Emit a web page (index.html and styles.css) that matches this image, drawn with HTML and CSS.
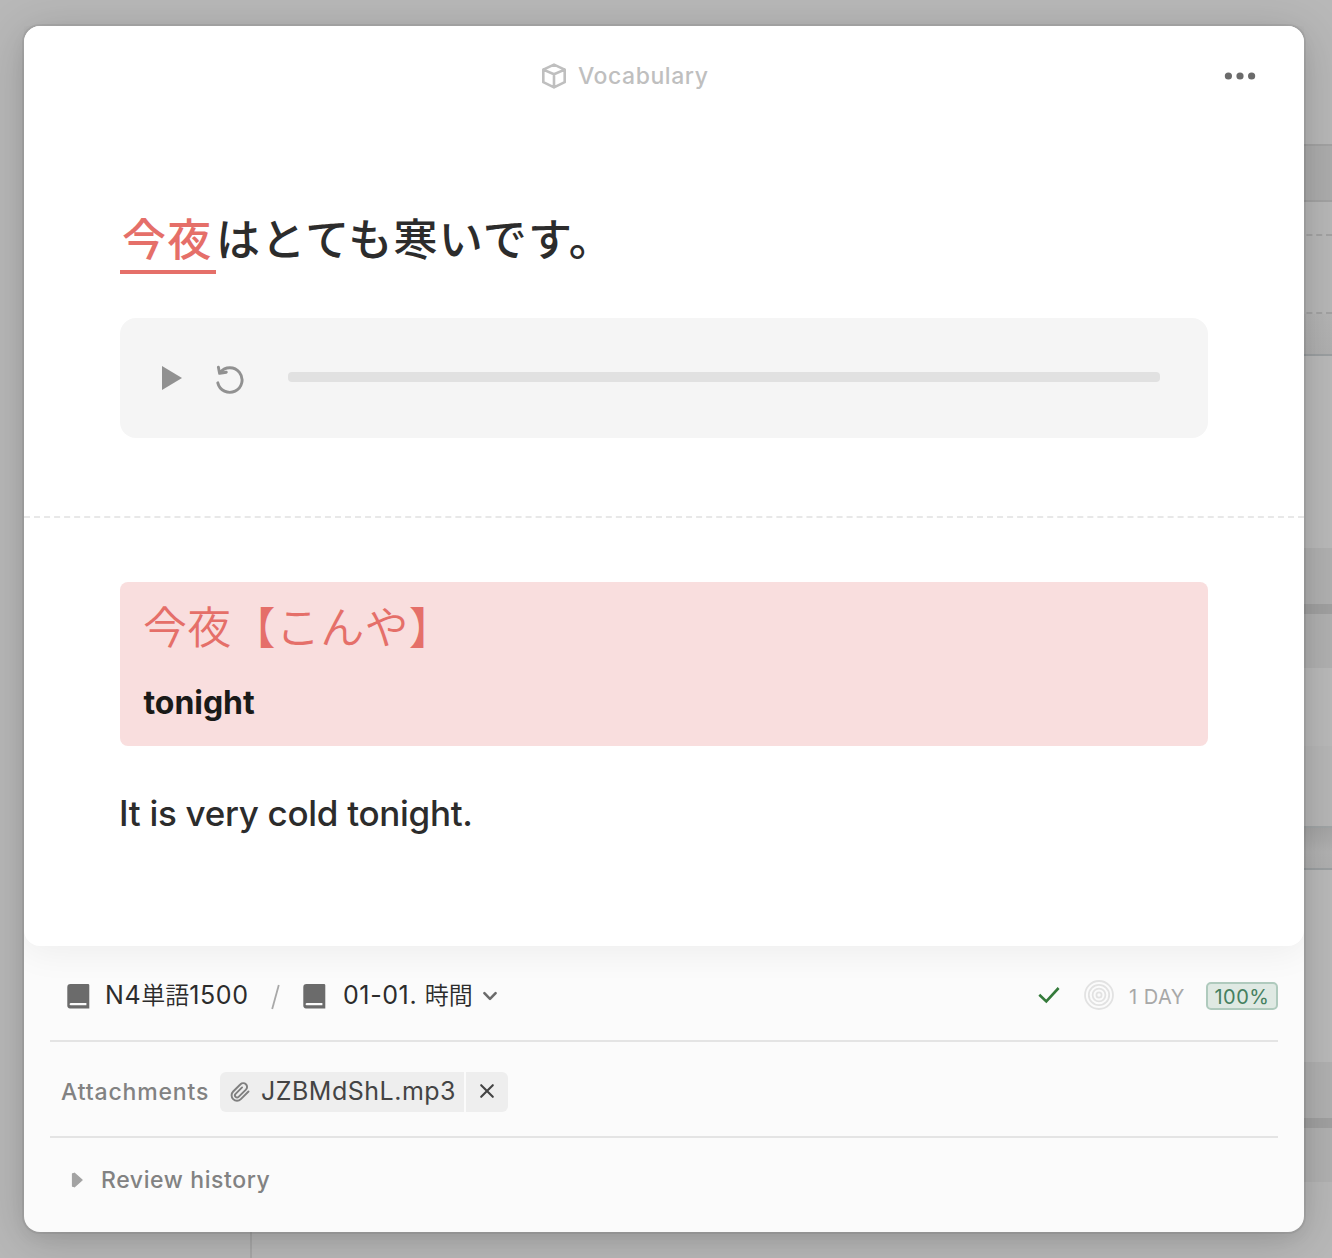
FILE: index.html
```html
<!DOCTYPE html>
<html lang="ja">
<head>
<meta charset="utf-8">
<title>Vocabulary</title>
<link rel="stylesheet" href="styles.css">
</head>
<body>
<div class="page">
  <div class="backdrop">
    <div class="sidebar-edge"></div>
    <div class="board">
      <div class="strip s-top"></div>
      <div class="strip s-head"></div>
      <div class="strip s-row1"></div>
      <div class="strip s-row2"></div>
      <div class="strip s-row3"></div>
      <div class="strip s-card"></div>
      <div class="strip s-block"></div>
      <div class="strip s-bar"></div>
      <div class="strip s-block2"></div>
      <div class="strip s-gap"></div>
      <div class="strip s-foot"></div>
      <div class="strip s-shadow"></div>
      <div class="strip s-card2"></div>
      <div class="strip s-block"></div>
      <div class="strip s-bar"></div>
      <div class="strip s-block2"></div>
    </div>
  </div>
  <main class="modal">
    <section class="card">
      <header class="card-head">
        <div class="kind">
          <svg width="26" height="26" viewBox="0 0 26 26" fill="none" stroke="currentColor" stroke-width="2.6" stroke-linejoin="round" stroke-linecap="round"><path d="M13 1.6 23.7 6.6V19.2L13 24.4 2.3 19.2V6.6ZM2.3 6.6 13 11.3 23.7 6.6M13 11.3V24.4"/></svg>
          <span class="kind-name">Vocabulary</span>
        </div>
        <svg class="more" width="32" height="8" viewBox="0 0 32 8" fill="currentColor"><circle cx="4.4" cy="4" r="3.6"/><circle cx="16" cy="4" r="3.6"/><circle cx="27.6" cy="4" r="3.6"/></svg>
      </header>
      <div class="front">
        <p class="prompt"><span class="target">今夜</span>はとても寒いです。</p>
        <div class="player">
          <svg class="play" width="20" height="24" viewBox="0 0 20 24"><path d="M0 0 20 12 0 24Z" fill="currentColor"/></svg>
          <svg class="replay" width="30" height="30" viewBox="0 0 30 30" fill="none" stroke="currentColor" stroke-width="2.9" stroke-linecap="round" stroke-linejoin="round"><path d="M2.8 18.8A12.3 12.3 0 1 0 5.2 8.3M3.4 3.2 4.6 9.4 11.3 8.2"/></svg>
          <div class="track"></div>
        </div>
      </div>
      <div class="divider"></div>
      <div class="back">
        <div class="answer">
          <p class="reading">今夜【こんや】</p>
          <p class="meaning">tonight</p>
        </div>
        <p class="translation">It is very cold tonight.</p>
      </div>
    </section>
    <footer class="info">
      <div class="row path-row">
        <svg class="book" width="23" height="25" viewBox="0 0 23 25"><path fill="currentColor" fill-rule="evenodd" d="M3.5 0H21Q22.3 0 22.3 1.3V24.4H3Q.3 24.4.3 21.6V3.2Q.3 0 3.5 0ZM4 19Q2.6 19 2.6 20.2T4 21.3H19.4V19Z"/></svg>
        <span class="deck">N4<span class="kanji">単語</span>1500</span>
        <svg class="slash" width="9" height="26" viewBox="0 0 9 26"><path d="M7.8 1 1.2 25" stroke="currentColor" stroke-width="1.8"/></svg>
        <svg class="book" width="23" height="25" viewBox="0 0 23 25"><path fill="currentColor" fill-rule="evenodd" d="M3.5 0H21Q22.3 0 22.3 1.3V24.4H3Q.3 24.4.3 21.6V3.2Q.3 0 3.5 0ZM4 19Q2.6 19 2.6 20.2T4 21.3H19.4V19Z"/></svg>
        <span class="lesson">01-01. <span class="kanji">時間</span></span>
        <svg class="chevron" width="16" height="10" viewBox="0 0 16 10" fill="none" stroke="currentColor" stroke-width="2.6" stroke-linecap="round" stroke-linejoin="round"><path d="M2.4 2.2 8 7.8 13.6 2.2"/></svg>
        <div class="stats">
          <svg class="check" width="22" height="18" viewBox="0 0 22 18" fill="none" stroke="#347a3a" stroke-width="2.6"><path d="M1.3 8.7 8.3 15.5 20.6 2"/></svg>
          <svg class="rings" width="30" height="30" viewBox="0 0 30 30" fill="none" stroke="#e2e2e2" stroke-width="1.8"><circle cx="15" cy="15" r="14"/><circle cx="15" cy="15" r="10.2"/><circle cx="15" cy="15" r="6.4"/><circle cx="15" cy="15" r="2.6"/></svg>
          <span class="interval">1 DAY</span>
          <span class="score">100%</span>
        </div>
      </div>
      <div class="row files-row">
        <span class="label">Attachments</span>
        <div class="file">
          <div class="file-name">
            <svg width="20" height="20" viewBox="0 0 24 24" fill="none" stroke="#808080" stroke-width="2.3" stroke-linecap="round" stroke-linejoin="round"><path d="M22.2 11.4 13 20.6a6.4 6.4 0 0 1-9.2-9.2L12.6 2.7a4.5 4.5 0 0 1 6.5 0 4.5 4.5 0 0 1 0 6.5l-8.8 8.7a2.5 2.5 0 0 1-3.6-3.6l7.8-7.8"/></svg>
            <span class="file-text">JZBMdShL.mp3</span>
          </div>
          <div class="file-close">
            <svg width="16" height="16" viewBox="0 0 16 16" stroke="#444" stroke-width="2.1" stroke-linecap="round"><path d="M2.2 2.2 13.8 13.8M13.8 2.2 2.2 13.8"/></svg>
          </div>
        </div>
      </div>
      <div class="row history-row">
        <svg width="12" height="16" viewBox="0 0 12 16"><path d="M1.6 1.8 3.4 1.3 11 8 3.4 14.7 1.6 14.2Z" fill="#a3a3a3" stroke="#a3a3a3" stroke-width="1.4" stroke-linejoin="round"/></svg>
        <span class="history">Review history</span>
      </div>
    </footer>
  </main>
</div>
</body>
</html>
```
FILE: styles.css
```css
* { box-sizing: border-box; }
body { margin: 0; font-family: Inter, "Noto Sans CJK JP", sans-serif; color: #2c2c2c; }
p { margin: 0; }
svg { display: block; flex: none; }

.page { display: grid; width: 1332px; height: 1258px; overflow: hidden; background: #b8b8b8; }
.backdrop, .modal { grid-area: 1 / 1; }
.backdrop { display: flex; justify-content: space-between; height: 1258px; }
.sidebar-edge { width: 252px; height: 200px; align-self: flex-end; background: #b8b8b8; border-right: 2px solid #a8a8a8; }
.board { width: 55px; }

.s-top { height: 144px; }
.s-head { height: 58px; background: #adadad; border-top: 2px solid #a3a3a3; border-bottom: 2px solid #a3a3a3; }
.s-row1 { height: 34px; border-bottom: 2px dashed #a3a3a3; }
.s-row2 { height: 78px; border-bottom: 2px dashed #a3a3a3; }
.s-row3 { height: 42px; border-bottom: 2px solid #9ca0a2; background: linear-gradient(#b5b5b5, #b0b0b0); }
.s-card { height: 192px; background: #bababa; }
.s-block { height: 56px; background: #b1b1b1; }
.s-bar { height: 10px; background: #a1a1a1; }
.s-block2 { height: 54px; background: #b1b1b1; }
.s-gap { height: 78px; background: #bababa; }
.s-foot { height: 80px; background: #b7b7b7; }
.s-shadow { height: 44px; background: linear-gradient(#a5a5a5, #b2b2b2 60%, #b0b0b0); border-top: 2px solid #a1a5a6; border-bottom: 2px solid #9ca0a2; }
.s-card2 { height: 192px; background: #bababa; }

.modal {
  width: 1280px; height: 1206px; margin: 26px 0 0 24px; z-index: 1;
  display: flex; flex-direction: column;
  background: #fbfbfb; border-radius: 16px;
  box-shadow: 0 0 0 2px rgba(0,0,0,.06), 0 8px 48px rgba(0,0,0,.18), 0 6px 16px rgba(0,0,0,.05);
}
.card {
  height: 920px; display: flex; flex-direction: column;
  background: #fff; border-radius: 16px;
  box-shadow: 0 6px 36px rgba(0,0,0,.06);
  clip-path: inset(0 0 -60px 0);
}
.card-head { display: flex; align-items: center; justify-content: space-between; height: 100px; padding: 0 48px 0 517px; }
.kind { display: flex; align-items: center; gap: 11px; color: #bfbfbf; }
.kind-name { font-size: 23px; font-weight: 500; letter-spacing: .55px; line-height: 32px; }
.more { color: #6b6b6b; }

.front { height: 390px; padding: 82px 96px 0; }
.prompt { height: 110px; font-size: 44px; line-height: 64px; font-weight: 500; letter-spacing: 1.25px; white-space: nowrap; }
.target { display: inline-block; width: 96px; height: 66px; padding-left: 2px; color: #e56f69; border-bottom: 4px solid #e56f69; line-height: 64px; }
.player { display: flex; align-items: center; height: 120px; padding: 0 48px 0 42px; border-radius: 16px; background: #f5f5f5; color: #919191; }
.replay { margin: 2px 0 0 33px; }
.track { flex: 1; height: 10px; margin: 0 0 2px 43px; border-radius: 4px; background: #e1e1e1; }

.divider { height: 2px; border-top: 2px dashed #e8e8e8; }
.back { padding: 64px 96px 0; }
.answer { height: 164px; padding: 15px 23px; border-radius: 8px; background: #f9dede; }
.reading { font-size: 44px; line-height: 62px; font-weight: 350; color: #e56f69; letter-spacing: .3px; }
.meaning { margin: 21px 0 0 .5px; font-size: 32px; line-height: 46px; font-weight: 700; color: #1a1a18; letter-spacing: -.05px; }
.translation { margin: 41px 0 0 -1px; font-size: 35px; line-height: 52px; font-weight: 450; letter-spacing: -.3px; }

.info { padding: 0 26px; }
.row { display: flex; align-items: center; }
.path-row { height: 96px; padding-left: 17px; border-bottom: 2px solid #e4e4e4; padding-top: 3px; }
.book { margin-top: 4px; color: #6b6b6b; }
.deck { width: 143px; margin-left: 15px; font-size: 25px; letter-spacing: .6px; white-space: nowrap; }
.deck, .lesson { margin-top: 2px; line-height: 36px; font-weight: 400; }
.kanji { font-size: 24px; font-weight: 350; letter-spacing: 0; }
.slash { margin: 4px 23px 0 23px; color: #a8a8a8; }
.lesson { width: 130px; margin-left: 17px; font-size: 25px; letter-spacing: .6px; white-space: nowrap; }
.chevron { margin: 3px 0 0 9px; color: #6b6b6b; }
.stats { display: flex; align-items: center; margin-left: auto; }
.rings { margin-left: 24px; }
.interval { width: 56px; margin-left: 15px; font-size: 20px; line-height: 28px; color: #a8a8a8; letter-spacing: .5px; white-space: nowrap; padding-top: 5px; }
.score { width: 72px; height: 28px; margin: 2px 0 0 21px; border: 2px solid #afcabd; border-radius: 5px; background: #dfe9e3; color: #45805f; text-align: center; font-size: 20px; line-height: 26px; letter-spacing: .5px; }

.files-row { height: 96px; padding: 6px 0 0 11px; border-bottom: 2px solid #e4e4e4; }
.label { width: 159px; margin-top: -1px; font-size: 23px; font-weight: 500; letter-spacing: .85px; color: #828282; }
.file { display: flex; gap: 2px; height: 40px; }
.file-name { display: flex; align-items: center; width: 244px; padding-left: 10px; gap: 11px; background: #eee; border-radius: 6px 0 0 6px; color: #444; }
.file-text { margin-top: -2px; font-size: 25px; letter-spacing: .5px; white-space: nowrap; }
.file-close { display: flex; align-items: center; justify-content: center; width: 42px; padding-bottom: 2px; background: #eee; border-radius: 0 6px 6px 0; }

.history-row { height: 84px; padding-left: 21px; gap: 18px; }
.history { font-size: 23px; font-weight: 500; letter-spacing: .6px; color: #828282; }
```
